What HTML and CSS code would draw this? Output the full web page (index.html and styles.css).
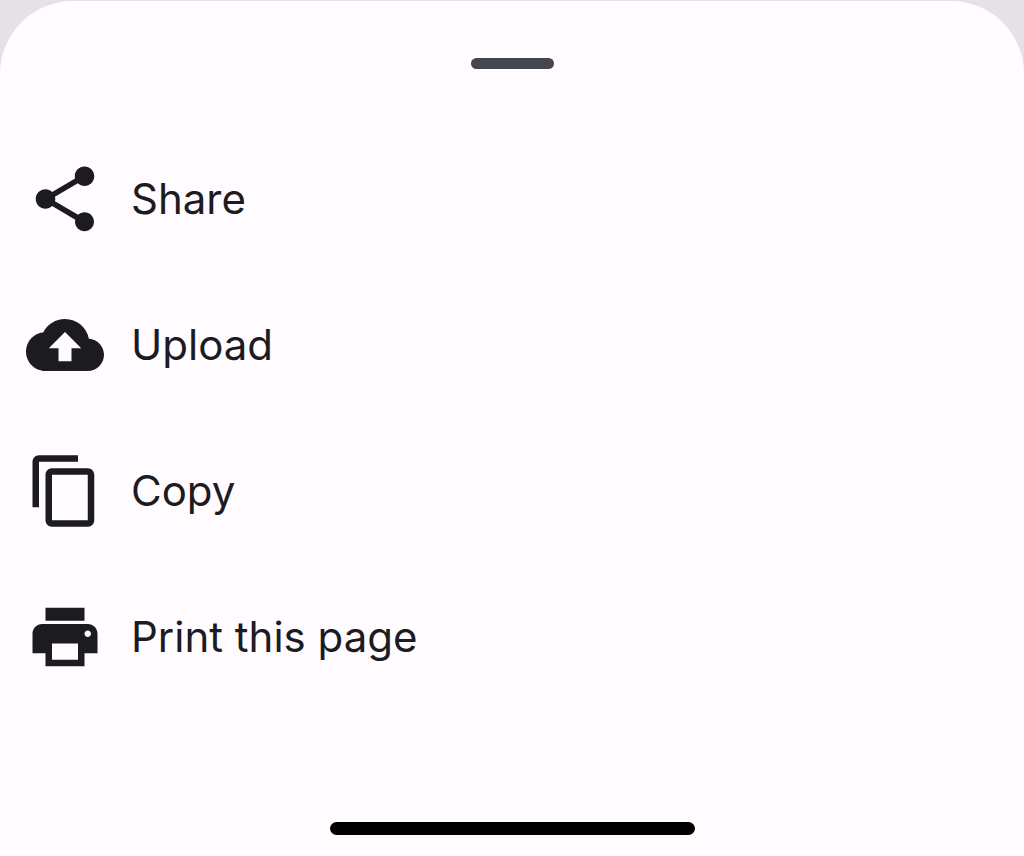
FILE: index.html
```html
<!DOCTYPE html>
<html lang="en">
<head>
<meta charset="utf-8">
<meta name="viewport" content="width=device-width, initial-scale=1">
<title>Actions</title>
<link rel="stylesheet" href="styles.css">
</head>
<body>
<main class="sheet">
  <div class="drag-handle"></div>
  <ul class="actions">
    <li><button class="action" type="button">
      <svg class="icon" viewBox="0 0 24 24" aria-hidden="true"><path d="M18 16.08c-.76 0-1.44.3-1.96.77L8.91 12.7c.05-.23.09-.46.09-.7s-.04-.47-.09-.7l7.05-4.11c.54.5 1.25.81 2.04.81 1.66 0 3-1.34 3-3s-1.34-3-3-3-3 1.34-3 3c0 .24.04.47.09.7L8.04 9.81C7.5 9.31 6.79 9 6 9c-1.66 0-3 1.34-3 3s1.34 3 3 3c.79 0 1.5-.31 2.04-.81l7.12 4.16c-.05.21-.08.43-.08.65 0 1.61 1.31 2.92 2.92 2.92s2.92-1.31 2.92-2.92-1.31-2.92-2.92-2.92z"/></svg>
      <span>Share</span></button></li>
    <li><button class="action" type="button">
      <svg class="icon" viewBox="0 0 24 24" aria-hidden="true"><path d="M19.35 10.04C18.67 6.59 15.64 4 12 4 9.11 4 6.6 5.64 5.35 8.04 2.34 8.36 0 10.91 0 14c0 3.31 2.69 6 6 6h13c2.76 0 5-2.24 5-5 0-2.64-2.05-4.78-4.65-4.96zM14 13v4h-4v-4H7l5-5 5 5h-3z"/></svg>
      <span>Upload</span></button></li>
    <li><button class="action" type="button">
      <svg class="icon" viewBox="0 0 24 24" aria-hidden="true"><path d="M16 1H4c-1.1 0-2 .9-2 2v14h2V3h12V1zm3 4H8c-1.1 0-2 .9-2 2v14c0 1.1.9 2 2 2h11c1.1 0 2-.9 2-2V7c0-1.1-.9-2-2-2zm0 16H8V7h11v14z"/></svg>
      <span>Copy</span></button></li>
    <li><button class="action" type="button">
      <svg class="icon" viewBox="0 0 24 24" aria-hidden="true"><path d="M19 8H5c-1.66 0-3 1.34-3 3v6h4v4h12v-4h4v-6c0-1.66-1.34-3-3-3zm-3 11H8v-5h8v5zm3-7c-.55 0-1-.45-1-1s.45-1 1-1 1 .45 1 1-.45 1-1 1zm-1-9H6v4h12V3z"/></svg>
      <span>Print this page</span></button></li>
  </ul>
  <div class="home-indicator"></div>
</main>
</body>
</html>
```
FILE: styles.css
```css
* {
  box-sizing: border-box;
}

body {
  margin: 0;
  padding-top: 1px;
  background: #e6e1e5;
  font-family: Inter, "Liberation Sans", sans-serif;
  color: #1c1b1f;
}

.sheet {
  display: flex;
  flex-direction: column;
  min-height: calc(100vh - 1px);
  padding: 57px 0 21px;
  border-radius: 73px 73px 0 0;
  background: #fffbff;
}

.drag-handle {
  align-self: center;
  width: 83px;
  height: 11px;
  border-radius: 6px;
  background: #46464f;
}

.actions {
  margin: 57px 0 0;
  padding: 0;
  list-style: none;
}

.action {
  display: flex;
  align-items: center;
  gap: 27px;
  width: 100%;
  height: 146px;
  padding: 0 26px;
  border: 0;
  background: transparent;
  color: inherit;
  font: inherit;
  font-size: 42px;
  line-height: 62px;
  text-align: left;
}

.icon {
  flex: none;
  width: 78px;
  height: 78px;
  fill: currentColor;
}

.home-indicator {
  align-self: center;
  width: 365px;
  height: 13px;
  margin-top: auto;
  border-radius: 7px;
  background: #000;
}
```
